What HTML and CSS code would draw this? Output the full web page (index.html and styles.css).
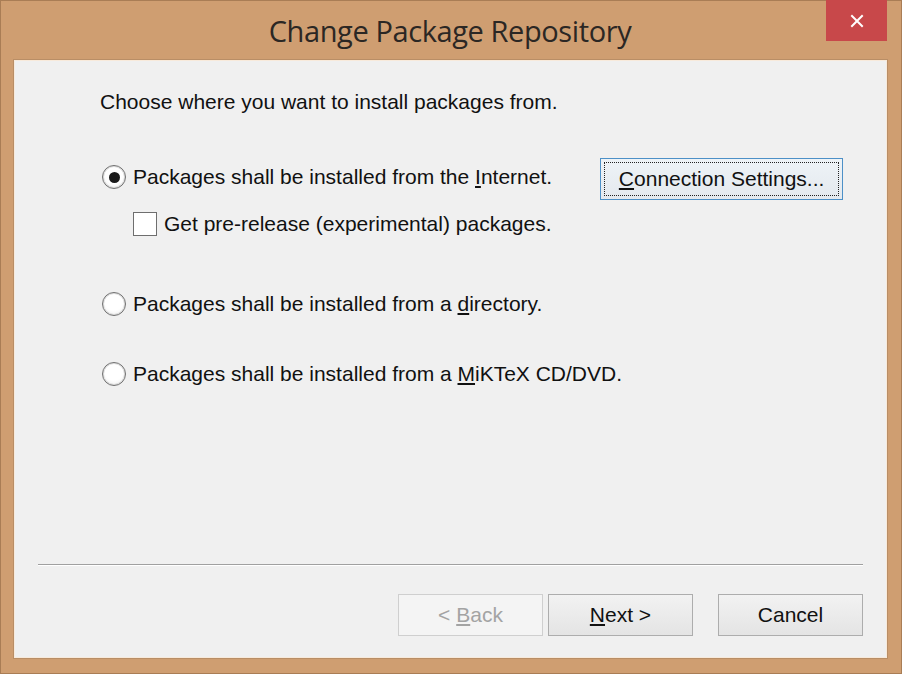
FILE: index.html
```html
<!DOCTYPE html>
<html>
<head>
<meta charset="utf-8">
<link rel="stylesheet" href="styles.css">
</head>
<body>
<div class="window">
  <div class="titlebar">
    <div class="title">Change Package Repository</div>
    <div class="close"><svg width="16" height="16" viewBox="0 0 16 16"><path d="M3 3 L13 13 M13 3 L3 13" stroke="#fff" stroke-width="2" stroke-linecap="square"/></svg></div>
  </div>
  <div class="client">
    <div class="content">
      <p class="intro">Choose where you want to install packages from.</p>
      <div class="row first">
        <label class="opt"><span class="radio checked"><span class="dot"></span></span><span>Packages shall be installed from the <u>I</u>nternet.</span></label>
        <button class="btn conn"><span class="focus"><u>C</u>onnection Settings...</span></button>
      </div>
      <label class="opt sub"><span class="check"></span><span>Get pre-release (experimental) packages.</span></label>
      <label class="opt r2"><span class="radio"></span><span>Packages shall be installed from a <u>d</u>irectory.</span></label>
      <label class="opt r3"><span class="radio"></span><span>Packages shall be installed from a <u>M</u>iKTeX CD/DVD.</span></label>
    </div>
    <div class="footer">
      <div class="sep"></div>
      <div class="buttons">
        <button class="btn disabled">&lt; <u>B</u>ack</button>
        <button class="btn"><u>N</u>ext &gt;</button>
        <button class="btn cancel">Cancel</button>
      </div>
    </div>
  </div>
</div>
</body>
</html>
```

FILE: styles.css
```css
html, body {
  margin: 0;
  padding: 0;
  background: #cf9d70;
}
.window {
  width: 902px;
  height: 674px;
  box-sizing: border-box;
  background: #cf9e71;
  border: 1px solid #a97d55;
  display: flex;
  flex-direction: column;
}
.titlebar {
  position: relative;
  height: 59px;
  display: flex;
  justify-content: center;
  align-items: center;
}
.title {
  font-family: "Open Sans", "Noto Sans", sans-serif;
  font-size: 29px;
  color: #2b2724;
  letter-spacing: -0.4px;
  margin-top: -1px;
  margin-left: -2px;
}
.close {
  position: absolute;
  top: -1px;
  left: 825px;
  width: 61px;
  height: 41px;
  background: #c8484a;
  display: flex;
  align-items: center;
  justify-content: center;
}
.client {
  margin: 0 14px 15px 13px;
  flex: 1;
  background: #f0f0f0;
  border: 1px solid #f8eadb;
  outline: 1px solid #b98e66;
  display: flex;
  flex-direction: column;
  font-family: "Liberation Sans", Arial, sans-serif;
  font-size: 21px;
  color: #111111;
}
.content {
  flex: 1;
  padding: 0 0 0 85px;
}
.intro {
  margin: 29px 0 0 0;
  line-height: 24px;
}
.row {
  display: flex;
  align-items: center;
}
.row.first {
  margin-top: 44px;
}
.opt {
  display: flex;
  align-items: center;
  gap: 7px;
  line-height: 24px;
}
.row .opt {
  margin-top: -4px;
}
.radio {
  width: 22px;
  height: 22px;
  border: 1px solid #707070;
  border-radius: 50%;
  background: radial-gradient(circle at 50% 40%, #ffffff 50%, #e8e8e8 100%);
  margin-left: 2px;
  display: flex;
  align-items: center;
  justify-content: center;
  box-shadow: inset 0 0 0 1px #dcdcdc;
}
.dot {
  width: 11px;
  height: 11px;
  border-radius: 50%;
  background: #1a1a1a;
}
.check {
  width: 22px;
  height: 22px;
  border: 1px solid #6e6e6e;
  background: #ffffff;
}
.sub {
  margin-top: 12px;
  margin-left: 33px;
}
.r2 {
  margin-top: 56px;
}
.r3 {
  margin-top: 46px;
}
.btn {
  font-family: "Liberation Sans", Arial, sans-serif;
  font-size: 21px;
  color: #111111;
  width: 145px;
  height: 42px;
  box-sizing: border-box;
  border: 1px solid #adadad;
  background: linear-gradient(#f2f2f2, #e4e4e4);
  padding: 0;
  margin: 0;
}
.btn.conn {
  width: 243px;
  margin-left: 48px;
  border: 1px solid #4d90c7;
  padding: 3px;
  background: linear-gradient(#eef3f7, #e4e9ee);
}
.focus {
  display: flex;
  align-items: center;
  justify-content: center;
  height: 100%;
  border: 1px dotted #222;
  box-sizing: border-box;
}
.footer {
  padding: 0 23px 21px 23px;
}
.sep {
  height: 1px;
  background: #a0a0a0;
  border-bottom: 1px solid #ffffff;
}
.buttons {
  display: flex;
  justify-content: flex-end;
  margin-top: 28px;
}
.btn.disabled {
  color: #a3a3a3;
  border-color: #cfcfcf;
  background: #f4f4f4;
}
.btn + .btn {
  margin-left: 5px;
}
.btn.cancel {
  margin-left: 25px;
}
```
